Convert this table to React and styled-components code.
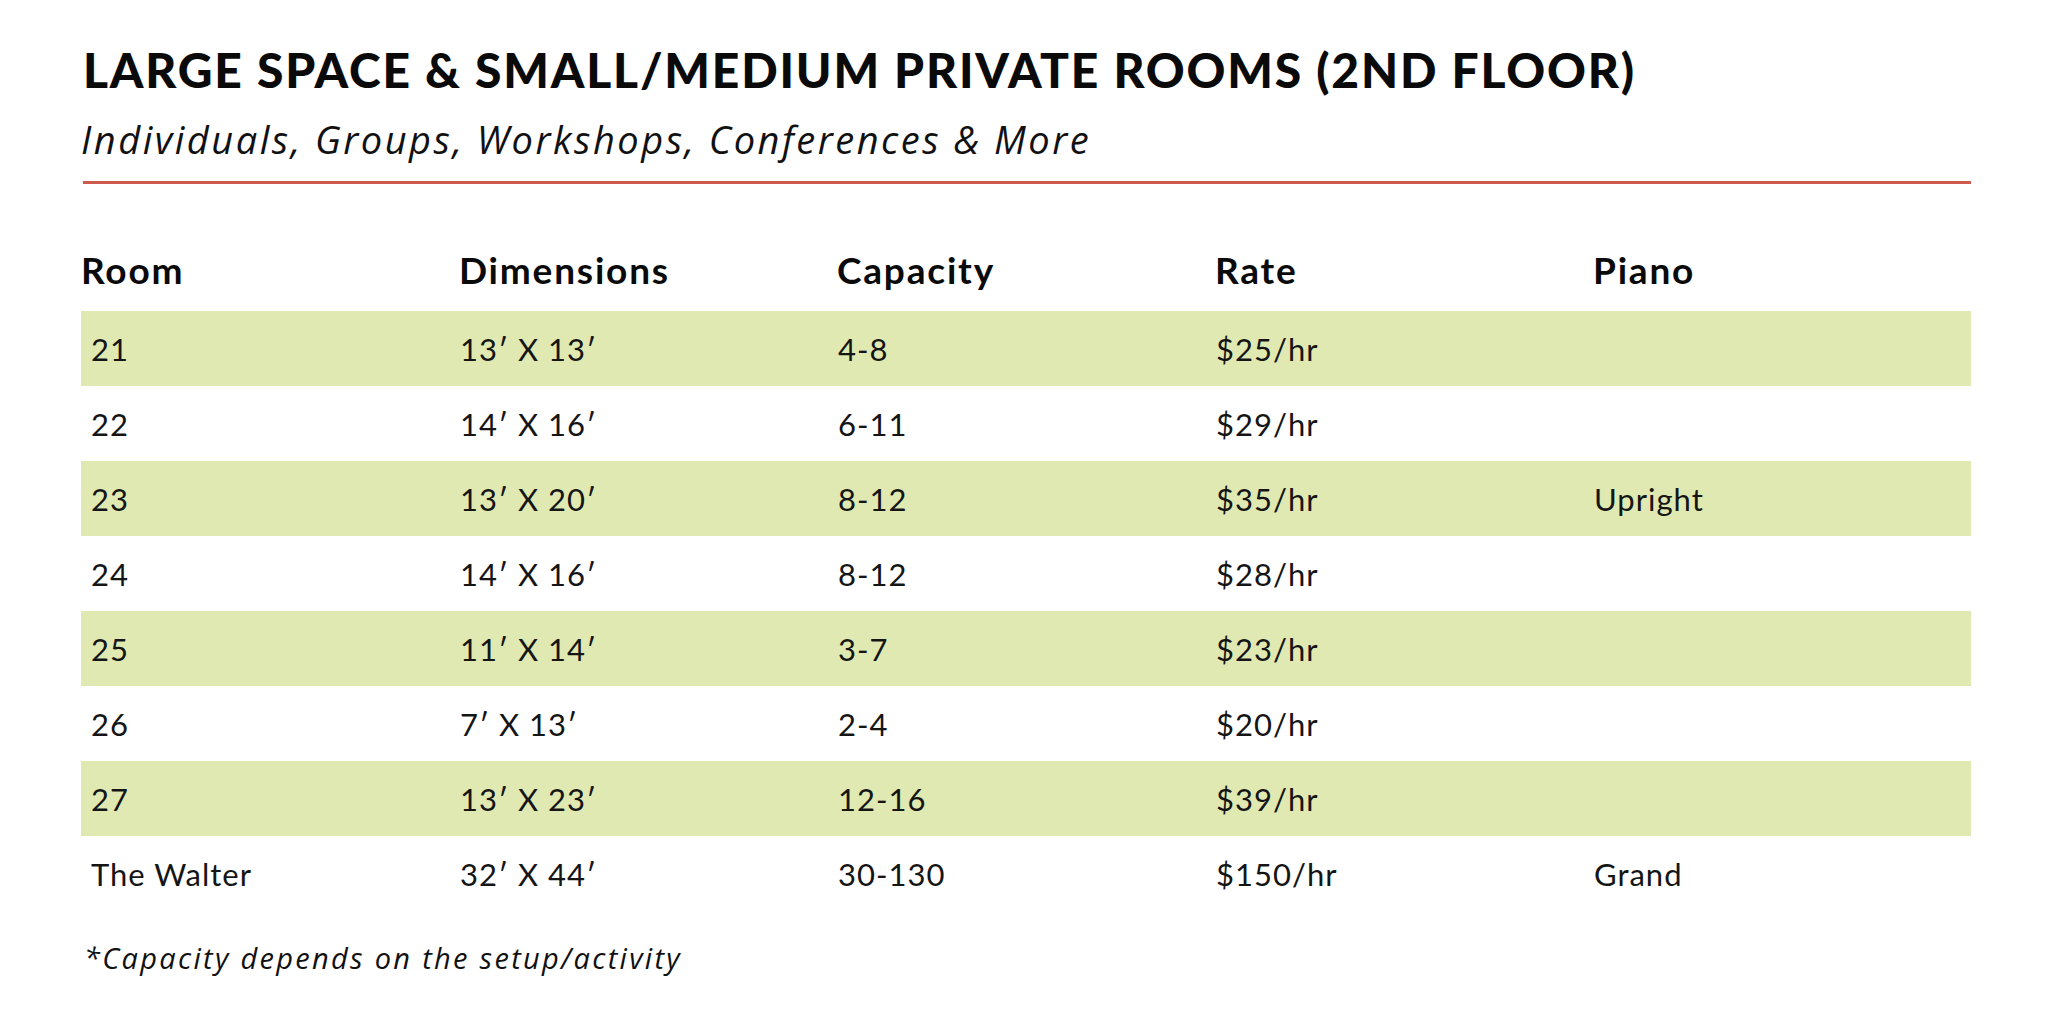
import React from "react";
import styled, { createGlobalStyle } from "styled-components";

const GlobalStyle = createGlobalStyle`
  html, body {
    margin: 0;
    padding: 0;
    background: #ffffff;
  }
  body {
    font-family: "Lato", "Liberation Sans", sans-serif;
    color: #111111;
  }
`;

const Page = styled.main`
  width: 1890px;
  padding: 46px 0 40px 81px;
  display: flex;
  flex-direction: column;
`;

const Title = styled.h1`
  margin: 0 0 0 2px;
  font-family: "Lato", "Liberation Sans", sans-serif;
  font-weight: 900;
  font-size: 48px;
  line-height: 48px;
  letter-spacing: 1.8px;
  color: #0a0a0a;
  white-space: nowrap;
`;

const Subtitle = styled.p`
  margin: 22px 0 0 0;
  font-family: "Open Sans", "Liberation Sans", sans-serif;
  font-style: italic;
  font-weight: 400;
  font-size: 38px;
  line-height: 46px;
  letter-spacing: 2.5px;
  color: #111111;
  white-space: nowrap;
`;

const Divider = styled.hr`
  margin: 19px 0 0 2px;
  border: 0;
  height: 3px;
  width: 1888px;
  background: #cd5a4d;
`;

const Table = styled.div`
  margin-top: 52px;
  display: flex;
  flex-direction: column;
`;

const Row = styled.div`
  display: grid;
  grid-template-columns: repeat(5, 378px);
  height: 75px;
  align-items: center;
  background: ${(p) => (p.$shaded ? "#dfe9b1" : "transparent")};
`;

const HeadRow = styled(Row)`
  box-sizing: border-box;
  padding-bottom: 8px;
`;

const HeadCell = styled.div`
  font-family: "Lato", "Liberation Sans", sans-serif;
  font-weight: 700;
  font-size: 37px;
  letter-spacing: 1.8px;
  color: #0a0a0a;
  white-space: nowrap;
`;

const Cell = styled.div`
  font-family: "Lato", "Liberation Sans", sans-serif;
  font-weight: 400;
  font-size: 31px;
  letter-spacing: 1px;
  color: #151515;
  padding-left: ${(p) => (p.$first ? "10px" : "1px")};
  white-space: nowrap;
`;

const Footnote = styled.p`
  margin: 29px 0 0 3px;
  font-family: "Open Sans", "Liberation Sans", sans-serif;
  font-style: italic;
  font-size: 29px;
  line-height: 36px;
  letter-spacing: 2.3px;
  color: #111111;
`;

const headers = ["Room", "Dimensions", "Capacity", "Rate", "Piano"];

const rows = [
  ["21", "13′ X 13′", "4-8", "$25/hr", ""],
  ["22", "14′ X 16′", "6-11", "$29/hr", ""],
  ["23", "13′ X 20′", "8-12", "$35/hr", "Upright"],
  ["24", "14′ X 16′", "8-12", "$28/hr", ""],
  ["25", "11′ X 14′", "3-7", "$23/hr", ""],
  ["26", "7′ X 13′", "2-4", "$20/hr", ""],
  ["27", "13′ X 23′", "12-16", "$39/hr", ""],
  ["The Walter", "32′ X 44′", "30-130", "$150/hr", "Grand"],
];

export default function App() {
  return (
    <>
      <GlobalStyle />
      <Page>
        <Title>LARGE SPACE &amp; SMALL/MEDIUM PRIVATE ROOMS (2ND FLOOR)</Title>
        <Subtitle>Individuals, Groups, Workshops, Conferences &amp; More</Subtitle>
        <Divider />
        <Table>
          <HeadRow>
            {headers.map((h) => (
              <HeadCell key={h}>{h}</HeadCell>
            ))}
          </HeadRow>
          {rows.map((r, ri) => (
            <Row key={ri} $shaded={ri % 2 === 0}>
              {r.map((c, ci) => (
                <Cell key={ci} $first={ci === 0}>
                  {c}
                </Cell>
              ))}
            </Row>
          ))}
        </Table>
        <Footnote>*Capacity depends on the setup/activity</Footnote>
      </Page>
    </>
  );
}
